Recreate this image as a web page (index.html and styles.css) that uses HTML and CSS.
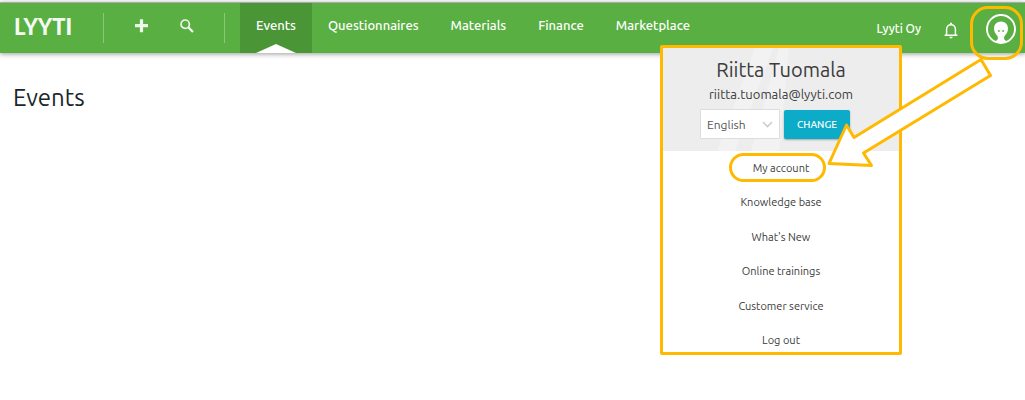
FILE: index.html
```html
<!DOCTYPE html>
<html lang="en">
<head>
<meta charset="utf-8">
<title>Events</title>
<link rel="stylesheet" href="styles.css">
</head>
<body>
<header class="topbar">
  <a class="logo" href="#">LYYTI</a>
  <div class="tools">
    <button class="icon-button" type="button" aria-label="Add">
      <svg width="14" height="14" viewBox="0 0 14 14"><path d="M6.500 .2v13M0 6.700h13" stroke="#eef7eb" stroke-width="3.200" fill="none"/></svg>
    </button>
    <button class="icon-button" type="button" aria-label="Search">
      <svg width="14" height="14" viewBox="0 0 14 14"><circle cx="5.200" cy="5.200" r="4.200" fill="none" stroke="#eef7eb" stroke-width="1.700"/><path d="M8.400 8.400l4.600 4.600" stroke="#eef7eb" stroke-width="2.200"/></svg>
    </button>
  </div>
  <nav class="nav">
    <a class="nav-link active" href="#">Events</a>
    <a class="nav-link" href="#">Questionnaires</a>
    <a class="nav-link" href="#">Materials</a>
    <a class="nav-link" href="#">Finance</a>
    <a class="nav-link" href="#">Marketplace</a>
  </nav>
  <div class="user">
    <span class="company">Lyyti Oy</span>
    <button class="icon-button bell" type="button" aria-label="Notifications">
      <svg width="14" height="17" viewBox="0 0 14 17"><path d="M2.600 12.600V7.200C2.600 4.600 4.500 2.700 7 2.700s4.400 1.900 4.400 4.500v5.400M.6 13.200h12.800" fill="none" stroke="#fff" stroke-width="1.500"/><path d="M6 .8h2v2H6zM5.300 14.800h3.400a1.700 1.700 0 0 1-3.400 0z" fill="#fff"/></svg>
    </button>
    <button class="icon-button avatar" type="button" aria-label="User menu">
      <svg width="30" height="30" viewBox="0 0 30 30"><circle cx="15" cy="15" r="14" fill="none" stroke="#fff" stroke-width="1.900"/><path d="M15 7.500c-4.200 0-7 2.900-7 7 0 3.300 1.600 5.300 3.200 7.300.9 1.200 1 2.700.2 3.900-.6.800-1.600 1.300-2.400 1.800 3.600 1.900 8.400 1.900 12 0-.8-.5-1.800-1-2.400-1.800-.8-1.200-.7-2.700.2-3.900 1.600-2 3.200-4 3.200-7.300 0-4.100-2.800-7-7-7z" fill="#fff"/><circle cx="12.900" cy="17" r=".9" fill="#59af42"/><circle cx="17.100" cy="17" r=".9" fill="#59af42"/></svg>
    </button>
  </div>
</header>
<main class="page">
  <h1 class="title">Events</h1>
</main>
<section class="menu">
  <div class="profile">
    <svg class="rays" viewBox="0 0 236 103" preserveAspectRatio="none"><path d="M54 103L92 0h18L72 103zM88 103L116 0h10l-10 103z" fill="#f2f2f2"/></svg>
    <h2 class="name">Riitta Tuomala</h2>
    <p class="email">riitta.tuomala@lyyti.com</p>
    <form class="language">
      <span class="select-box">
        <select class="select" aria-label="Language"><option>English</option></select>
        <svg class="chevron" width="11" height="7" viewBox="0 0 11 7"><path d="M1 1l4.500 4.500L10 1" fill="none" stroke="#ccc" stroke-width="1.600"/></svg>
      </span>
      <button class="change" type="button">CHANGE</button>
    </form>
  </div>
  <ul class="links">
    <li><a class="link highlighted" href="#">My account</a></li>
    <li><a class="link" href="#">Knowledge base</a></li>
    <li><a class="link" href="#">What's New</a></li>
    <li><a class="link" href="#">Online trainings</a></li>
    <li><a class="link" href="#">Customer service</a></li>
    <li><a class="link" href="#">Log out</a></li>
  </ul>
</section>
<svg class="arrow" width="168" height="112" viewBox="0 0 168 112"><path d="M5 106.500L22.500 68l7.500 12.500L157 2.500l9.500 16L39.500 96l8 12.500z" fill="#fff" stroke="#ffb900" stroke-width="3" stroke-linejoin="round"/></svg>
</body>
</html>
```

FILE: styles.css
```css
*, *::before { box-sizing: border-box; }

body {
  position: relative;
  min-height: 100vh;
  margin: 0;
  padding-top: 2px;
  background: #fff;
  color: #3c3c3c;
  font-family: Ubuntu, "Open Sans", "Noto Sans", sans-serif;
}

a { color: inherit; text-decoration: none; }

.topbar {
  display: flex;
  align-items: stretch;
  height: 51px;
  border-top: 1px solid #aaa9ad;
  background: #59af42;
  box-shadow: 0 1px 5px rgba(0, 0, 0, 0.4);
  color: #fff;
}

.logo {
  width: 103px;
  padding-left: 14px;
  color: #f4faf2;
  font: 900 22px/48px Lato, sans-serif;
}

.tools {
  display: flex;
  align-items: center;
  gap: 31px;
  height: 30px;
  margin: 10px 15px 0 0;
  padding: 0 30px 5px 31px;
  border: solid #8bc77a;
  border-width: 0 1px;
}

.icon-button {
  display: flex;
  padding: 0;
  border: 0;
  background: none;
}

.nav { display: flex; }

.nav-link {
  position: relative;
  padding: 0 16px;
  font-size: 13px;
  font-weight: 500;
  line-height: 45px;
}

.nav-link.active { background: #4a9636; }

.nav-link.active::after {
  content: "";
  position: absolute;
  bottom: 0;
  left: 50%;
  margin-left: -20px;
  border: solid transparent;
  border-width: 0 20px 9px;
  border-bottom-color: #fff;
}

.user {
  display: flex;
  align-items: center;
  margin-left: auto;
  padding-right: 2px;
}

.company { font-size: 12px; font-weight: 500; }

.bell { margin: 4px 12px 0 23px; }

.avatar {
  align-items: center;
  justify-content: center;
  width: 53px;
  height: 54px;
  margin-top: 10px;
  padding: 0 0 8px 8px;
  border: 3px solid #ffb900;
  border-radius: 18px;
}

.page { padding: 27px 13px; }

.title {
  margin: 0;
  color: #1b262c;
  font-size: 24px;
  font-weight: 400;
  line-height: 36px;
}

.menu {
  position: absolute;
  top: 45px;
  right: 123px;
  width: 242px;
  border: 3px solid #ffb900;
  border-radius: 2px;
  background: #fff;
}

.profile {
  position: relative;
  height: 103px;
  padding-top: 8px;
  background: #ededed;
  text-align: center;
}

.rays { position: absolute; inset: 0; width: 100%; height: 100%; }

.name, .email, .language { position: relative; margin: 0; }

.name { font-size: 20px; font-weight: 400; line-height: 27px; }

.email { font-size: 13px; line-height: 23px; }

.language {
  display: flex;
  justify-content: center;
  gap: 4px;
  margin: 3px 12px 0 0;
}

.select-box { position: relative; display: flex; }

.select {
  width: 80px;
  height: 30px;
  padding: 0 6px;
  appearance: none;
  border: 1px solid #ddd;
  border-radius: 1px;
  background: #fff;
  color: #555;
  font: inherit;
  font-size: 12px;
}

.chevron { position: absolute; top: 12px; right: 7px; }

.change {
  width: 66px;
  height: 29px;
  margin-top: 1px;
  padding: 0;
  border: 0;
  border-radius: 2px;
  background: #0cabc7;
  box-shadow: 0 1px 2px rgba(0, 0, 0, 0.3);
  color: #fff;
  font: inherit;
  font-size: 10px;
  font-weight: 500;
}

.links {
  margin: 0;
  padding: 0;
  list-style: none;
  text-align: center;
  font-size: 11px;
  line-height: 34px;
}

.links li { height: 34px; }
.links li:nth-child(even) { height: 35px; }
.links li:last-child { height: 29px; }

.link { display: block; }

.link.highlighted { position: relative; }

.link.highlighted::before {
  content: "";
  position: absolute;
  top: 2px;
  left: 66px;
  width: 97px;
  height: 29px;
  border: 3px solid #ffb900;
  border-radius: 15px;
}

.arrow { position: absolute; top: 57px; right: 33px; }
```
